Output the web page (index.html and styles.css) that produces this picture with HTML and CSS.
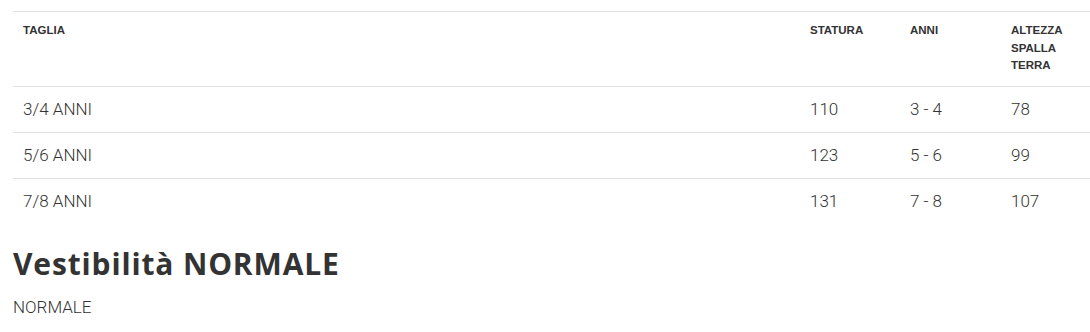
FILE: index.html
```html
<!DOCTYPE html>
<html lang="it">
<head>
    <meta charset="UTF-8">
    <title>Guida taglie</title>
    <link rel="stylesheet" href="styles.css">
</head>
<body>
    <div class="size-guide">
        <table class="size-table">
            <thead>
                <tr>
                    <th>TAGLIA</th>
                    <th class="col-stat">STATURA</th>
                    <th class="col-anni">ANNI</th>
                    <th class="col-alt">ALTEZZA SPALLA TERRA</th>
                </tr>
            </thead>
            <tbody>
                <tr>
                    <td>3/4 ANNI</td>
                    <td>110</td>
                    <td>3 - 4</td>
                    <td>78</td>
                </tr>
                <tr>
                    <td>5/6 ANNI</td>
                    <td>123</td>
                    <td>5 - 6</td>
                    <td>99</td>
                </tr>
                <tr>
                    <td>7/8 ANNI</td>
                    <td>131</td>
                    <td>7 - 8</td>
                    <td>107</td>
                </tr>
            </tbody>
        </table>

        <h2 class="fit-title">Vestibilità NORMALE</h2>
        <p class="fit-text">NORMALE</p>
    </div>
</body>
</html>
```

FILE: styles.css
```css
body {
    margin: 0;
    padding: 0;
    background-color: #ffffff;
    font-family: Roboto, "Liberation Sans", sans-serif;
    color: #444;
}
.size-guide {
    padding: 11px 0 0 13px;
}
.size-table {
    width: 1077px;
    border-collapse: collapse;
    table-layout: fixed;
}
.size-table th {
    font-family: "Liberation Sans", Arial, sans-serif;
    font-size: 11.5px;
    font-weight: bold;
    line-height: 17.7px;
    color: #333;
    text-align: left;
    vertical-align: top;
    padding: 10px 10px 11px;
    border-top: 1px solid #e2e2e2;
    border-bottom: 1px solid #e2e2e2;
}
.size-table .col-stat {
    width: 80px;
}
.size-table .col-anni {
    width: 81px;
}
.size-table .col-alt {
    width: 69px;
}
.size-table td {
    font-size: 17px;
    font-weight: 300;
    line-height: 21px;
    padding: 12px 10px;
    color: #333;
}
.size-table tbody tr + tr td {
    border-top: 1px solid #e2e2e2;
}
.fit-title {
    font-family: "Open Sans", sans-serif;
    font-size: 30px;
    font-weight: 700;
    letter-spacing: 0.85px;
    color: #333;
    margin: 22px 0 0;
    line-height: 36px;
}
.fit-text {
    font-size: 17px;
    font-weight: 300;
    line-height: 20px;
    margin: 15px 0 0;
    color: #333;
}
```
